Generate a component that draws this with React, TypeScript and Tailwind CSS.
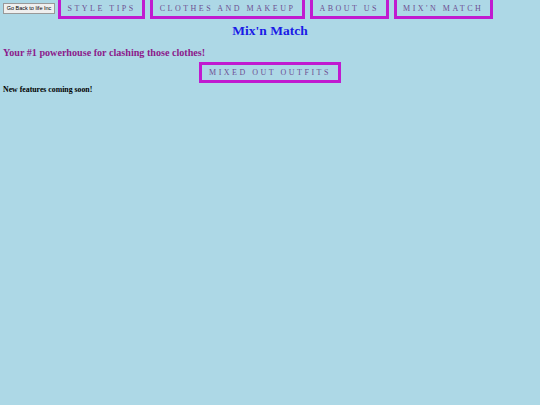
import React from 'react';

const navItems = ['STYLE TIPS', 'CLOTHES AND MAKEUP', 'ABOUT US', "MIX'N MATCH"];

function NavBox({ label }: { label: string }) {
  return (
    <a
      href="#"
      className="block border-[3px] border-[#c01ad0] px-[6.5px] pt-[5px] pb-[2px] text-[8px] leading-[10px] tracking-[2.5px] text-[#6e4f92] no-underline"
    >
      {label}
    </a>
  );
}

export default function App() {
  return (
    <div className="min-h-[405px] bg-[#add8e6] font-['Liberation_Serif',serif] text-black">
      {/* Top bar */}
      <div className="flex items-start gap-[3px] pl-[3px]">
        <button className="mt-[3px] h-[11px] w-[52px] border border-[#999] bg-[#efefef] p-0 font-['Liberation_Sans',sans-serif] text-[5.5px] leading-[9px] text-black">
          Go Back to life Inc
        </button>
        <div className="mt-[-4px] flex gap-[5px]">
          {navItems.map((n) => (
            <NavBox key={n} label={n} />
          ))}
        </div>
      </div>

      <h1 className="mt-[1px] text-center text-[13.5px] font-bold leading-[22px] text-[#1a1ae6]">Mix'n Match</h1>

      <p className="mt-[4px] pl-[3px] text-[10.15px] font-bold leading-[14px] text-[#8b1a8b]">
        Your #1 powerhouse for clashing those clothes!
      </p>

      <div className="mt-[2px] flex justify-center">
        <a
          href="#"
          className="block border-[3px] border-[#c01ad0] px-[7px] pt-[3px] pb-[2px] text-[8px] leading-[10px] tracking-[2.5px] text-[#6e4f92] no-underline"
        >
          MIXED OUT OUTFITS
        </a>
      </div>

      <p className="mt-[2px] pl-[3px] text-[7.8px] font-bold leading-[10px]">New features coming soon!</p>
    </div>
  );
}
